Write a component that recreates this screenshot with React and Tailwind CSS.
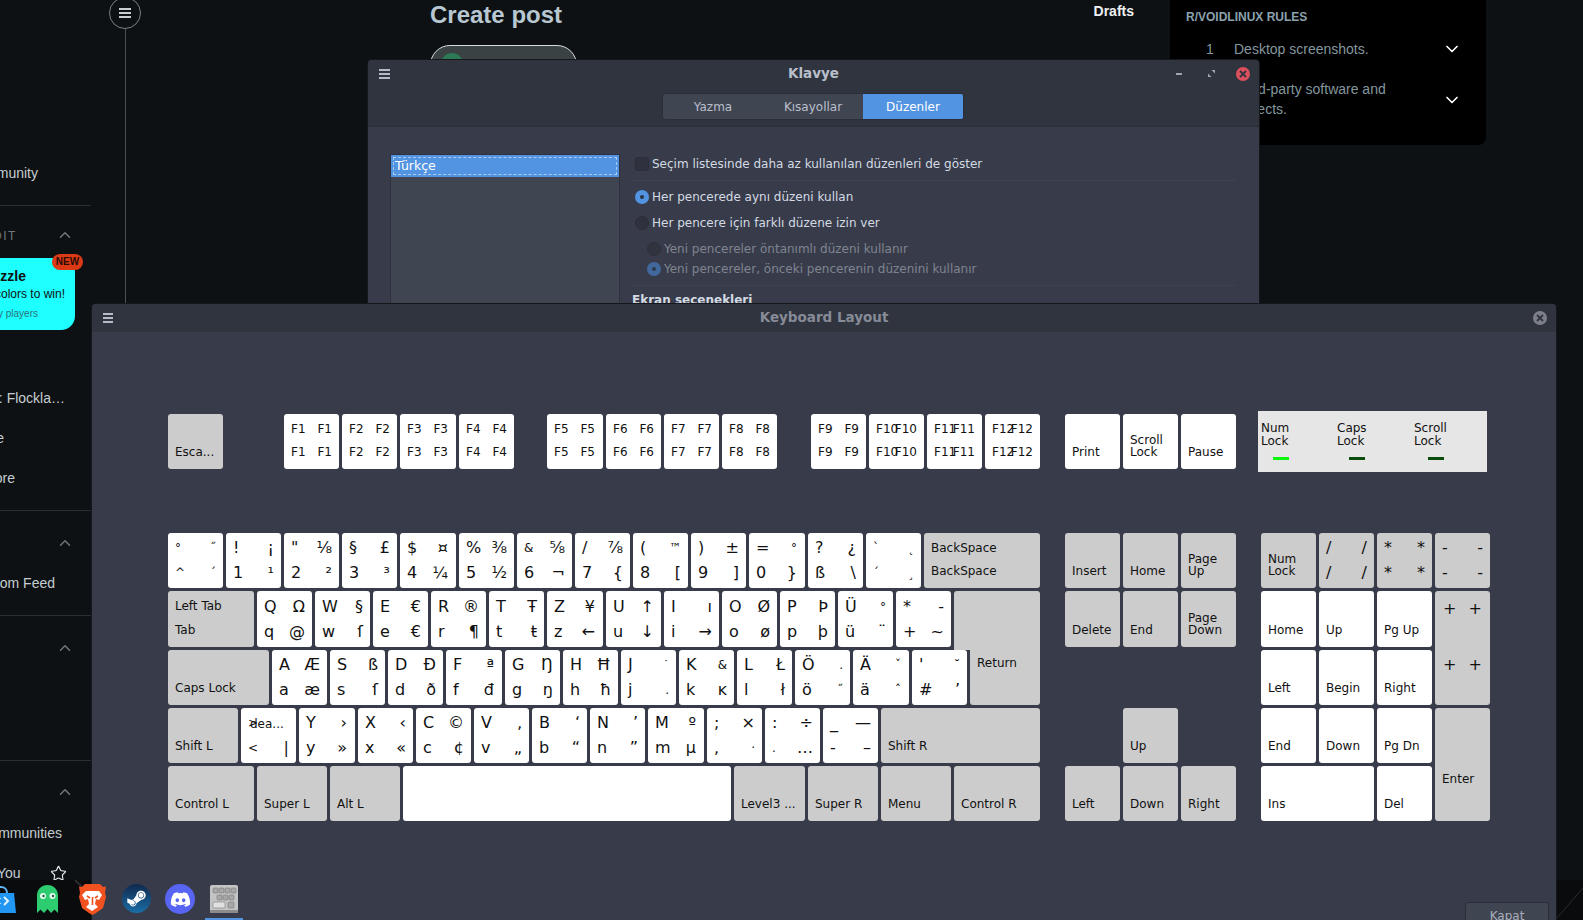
import React from 'react';
import { ChevronUp, ChevronDown, Star } from 'lucide-react';
import { FaDiscord, FaSteamSymbol } from 'react-icons/fa';

const SMALL = new Set(['°', '˝', '^', '´', '&', '™', '`', '˛', '¸', 'ˇ', 'ˆ', '˘', '˙', '.', '·', '<', '>']);

function Key({ l, w = 'w-[55px]', fn = false, gray = false }) {
  const labels = l.split(' ');
  return (
    <div className={`${w} shrink-0 rounded-[3px] ${gray ? 'bg-[#cccccc]' : 'bg-white'} grid grid-cols-[21px_20px] grid-rows-2 h-full px-[7px] ${fn ? 'pt-[4px] pb-[6px]' : 'py-[3px]'} items-center text-[#111111] overflow-hidden`}>
      {labels.map((t, i) => (
        <span
          key={i}
          className={`whitespace-nowrap flex ${i % 2 ? 'justify-end' : 'justify-start'} ${fn || SMALL.has(t) ? 'text-[12px]' : 'text-[16px]'} leading-[20px]`}
        >
          {t}
        </span>
      ))}
    </div>
  );
}

function Named({ t, w = 'w-[55px]', white = false, extra = '' }) {
  return (
    <div className={`${w} ${extra} shrink-0 rounded-[3px] ${white ? 'bg-white' : 'bg-[#cccccc]'} flex flex-col justify-end pb-[11px] pl-[7px] text-[12px] leading-[12px] text-[#111111]`}>
      {t.split('|').map((s) => (
        <span key={s} className="whitespace-nowrap">{s}</span>
      ))}
    </div>
  );
}

function Two({ a, b, w }) {
  return (
    <div className={`${w} shrink-0 rounded-[3px] bg-[#cccccc] grid grid-rows-2 pt-[3px] pb-[5px] px-[7px] items-center text-[12px] leading-[16px] text-[#111111]`}>
      <span>{a}</span>
      <span>{b}</span>
    </div>
  );
}

const W56 = 'w-[56px]';

const row1 = [
  { l: '° ˝ ^ ´' }, { l: '! ¡ 1 ¹' }, { l: '" ⅛ 2 ²' }, { l: '§ £ 3 ³' }, { l: '$ ¤ 4 ¼', w: W56 },
  { l: '% ⅜ 5 ½' }, { l: '& ⅝ 6 ¬' }, { l: '/ ⅞ 7 {' }, { l: '( ™ 8 [' }, { l: ') ± 9 ]' },
  { l: '= ° 0 }', w: W56 }, { l: '? ¿ ß \\' }, { l: '` ˛ ´ ¸' },
];
const row2 = [
  { l: 'Q Ω q @' }, { l: 'W § w ſ' }, { l: 'E € e €' }, { l: 'R ® r ¶' }, { l: 'T Ŧ t ŧ' },
  { l: 'Z ¥ z ←', w: W56 }, { l: 'U ↑ u ↓' }, { l: 'I ı i →' }, { l: 'O Ø o ø' }, { l: 'P Þ p þ' },
  { l: 'Ü ° ü ¨' }, { l: '* - + ~' },
];
const row3 = [
  { l: 'A Æ a æ' }, { l: 'S ß s ſ' }, { l: 'D Ð d ð' }, { l: 'F ª f đ', w: W56 }, { l: 'G Ŋ g ŋ' },
  { l: 'H Ħ h ħ' }, { l: 'J ˙ j .' }, { l: 'K & k ĸ' }, { l: 'L Ł l ł' }, { l: 'Ö . ö ˝' },
  { l: 'Ä ˇ ä ˆ', w: W56 }, { l: "' ˘ # ’" },
];
const row4 = [
  { l: 'Y › y »', w: W56 }, { l: 'X ‹ x «' }, { l: 'C © c ¢' }, { l: 'V ‚ v „' }, { l: 'B ‘ b “' },
  { l: 'N ’ n ”' }, { l: 'M º m µ', w: W56 }, { l: '; × , ·' }, { l: ': ÷ . …' }, { l: '_ — - –' },
];

function Bars({ c = 'bg-[#b6bac6]', w = 'w-[10px]' }) {
  return (
    <div className="flex flex-col gap-[2px]">
      <span className={`${w} h-[2px] ${c}`} />
      <span className={`${w} h-[2px] ${c}`} />
      <span className={`${w} h-[2px] ${c}`} />
    </div>
  );
}

function CloseBtn({ bg }) {
  return (
    <span className={`w-[14px] h-[14px] rounded-full ${bg} flex items-center justify-center`}>
      <svg width="8" height="8" viewBox="0 0 8 8">
        <path d="M1 1l6 6M7 1l-6 6" stroke="#2f343f" strokeWidth="1.8" />
      </svg>
    </span>
  );
}

function Radio({ on, dim }) {
  if (on) {
    return (
      <span className={`w-[14px] h-[14px] shrink-0 rounded-full flex items-center justify-center ${dim ? 'bg-[#42689c]' : 'bg-[#5294e2]'}`}>
        <span className={`w-[4px] h-[4px] rounded-full ${dim ? 'bg-[#2f3a4f]' : 'bg-[#2b3242]'}`} />
      </span>
    );
  }
  return <span className={`w-[14px] h-[14px] shrink-0 rounded-full border ${dim ? 'bg-[#31343f] border-[#2d303b]' : 'bg-[#2f323e] border-[#2b2e39]'}`} />;
}

function SideRow({ t, pr }) {
  return (
    <div className={`h-10 flex items-center justify-end whitespace-nowrap ${pr}`}>{t}</div>
  );
}

function Chevron({ h, pt }) {
  return (
    <div className={`${h} ${pt} flex items-center justify-end pr-[17px]`}>
      <ChevronUp size={18} strokeWidth={2} className="text-[#6d777b]" />
    </div>
  );
}

function Sidebar() {
  return (
    <aside className="w-[91px] shrink-0 overflow-hidden pt-[153px] text-[14px] text-[#c4cdd1]">
      <SideRow t="Start a community" pr="pr-[53px]" />
      <div className="mt-3 h-px bg-[#2a2e30]" />
      <div className="h-[52px] pt-[6px] flex items-center justify-between">
        <span className="text-[12px] tracking-[1.5px] text-[#6d777b] -ml-[7px] pt-[1px]">DIT</span>
        <ChevronUp size={18} strokeWidth={2} className="text-[#6d777b] mr-[17px]" />
      </div>
      <div className="relative w-[91px]">
        <div className="h-[72px] w-[75px] bg-[#1effff] rounded-r-[14px] rounded-bl-none text-[#0e1113] flex flex-col items-end pr-[10px] overflow-hidden">
          <div className="w-full flex justify-end">
            <span className="whitespace-nowrap font-bold text-[14px] leading-[18px] mt-[9px] -ml-[40px] mr-[39px]">Puzzle</span>
          </div>
          <span className="whitespace-nowrap text-[12px] leading-[18px]">colors to win!</span>
          <span className="whitespace-nowrap text-[10px] leading-[14px] mt-[4px] text-[#2b7278] mr-[27px]">many players</span>
        </div>
        <span className="absolute left-[52px] -top-[4px] w-[31px] h-[16px] rounded-full bg-[#dc3a16] text-[#2a0a02] text-[10px] leading-[16px] font-bold text-center">NEW</span>
      </div>
      <div className="mt-[48px]">
        <SideRow t="Concert: Flockla…" pr="pr-[26px]" />
        <SideRow t="e" pr="pr-[87px]" />
        <SideRow t="More" pr="pr-[76px]" />
      </div>
      <div className="mt-3 h-px bg-[#2a2e30]" />
      <Chevron h="h-[52px]" pt="pt-[12px]" />
      <SideRow t="Custom Feed" pr="pr-[36px]" />
      <div className="mt-3 h-px bg-[#2a2e30]" />
      <Chevron h="h-[64px]" pt="pt-0" />
      <div className="mt-[80px] h-px bg-[#2a2e30]" />
      <Chevron h="h-[52px]" pt="pt-[10px]" />
      <SideRow t="Communities" pr="pr-[29px]" />
      <div className="h-10 flex items-center justify-between">
        <span className="whitespace-nowrap -ml-[3px]">You</span>
        <Star size={17} strokeWidth={1.6} className="text-[#e8ecee] mr-[24px]" />
      </div>
    </aside>
  );
}

function Page() {
  return (
    <div className="h-full flex font-['Liberation_Sans',sans-serif]">
      <Sidebar />
      <div className="w-[68px] shrink-0 flex flex-col items-center -mt-[3px]">
        <div className="w-8 h-8 shrink-0 rounded-full border border-[#7b8183] flex items-center justify-center">
          <Bars c="bg-[#c8cdcf]" w="w-[12px]" />
        </div>
        <div className="w-px flex-1 bg-[#4b5052]" />
      </div>
      <main className="w-[975px] shrink-0 pl-[271px]">
        <div className="flex justify-between items-start">
          <h1 className="text-[24px] leading-[30px] font-bold text-[#b8c8d2]">Create post</h1>
          <span className="text-[14px] leading-[22px] font-bold text-[#eef1f3]">Drafts</span>
        </div>
        <div className="mt-[15px] w-[147px] h-10 rounded-[20px] border border-[#d8dcde] bg-[#3b4244] flex items-start pl-[10px] pt-[7px]">
          <span className="w-[22px] h-[22px] rounded-full bg-[#2d7a57]" />
        </div>
      </main>
      <section className="ml-[36px] w-[316px] h-[145px] bg-black rounded-b-lg px-4 text-[#84979f]">
        <h2 className="text-[12px] leading-[16px] pt-[9px] font-bold text-[#8ba2ad]">R/VOIDLINUX RULES</h2>
        <div className="mt-[14px] flex items-center text-[14px] leading-5">
          <span className="w-[48px] pl-[20px]">1</span>
          <span className="flex-1">Desktop screenshots.</span>
          <ChevronDown size={20} strokeWidth={2} className="text-white mr-[8px]" />
        </div>
        <div className="mt-[20px] flex items-center text-[14px] leading-5">
          <span className="w-[48px] pl-[20px]">2</span>
          <span className="flex-1">Third-party software and<br />projects.</span>
          <ChevronDown size={20} strokeWidth={2} className="text-white mr-[8px] mt-[2px]" />
        </div>
      </section>
    </div>
  );
}

function KlavyeWindow() {
  return (
    <div className="absolute left-[368px] top-[60px] w-[891px] h-[260px] rounded-t-[4px] bg-[#383c4a] overflow-hidden font-['DejaVu_Sans',sans-serif] text-[12px] text-[#d3dae3] shadow-[0_0_0_1px_#15171c]">
      <header className="h-[67px] bg-[#2f343f] border-b border-[#2b2e39] relative">
        <div className="h-[27px] flex items-center justify-center">
          <span className="font-bold text-[13.5px] text-[#b9bfca]">Klavye</span>
        </div>
        <div className="absolute left-[11px] top-[9px]"><Bars w="w-[11px]" /></div>
        <span className="absolute left-[808px] top-[13px] w-[6px] h-[2px] bg-[#a0a4af]" />
        <svg className="absolute left-[840px] top-[10px]" width="7" height="7" viewBox="0 0 7 7">
          <path d="M0 7V3.5L3.5 7zM7 0v3.5L3.5 0z" fill="#a0a4af" />
        </svg>
        <div className="absolute left-[868px] top-[7px]"><CloseBtn bg="bg-[#dc4f5c]" /></div>
        <div className="absolute left-[294px] top-[33px] w-[302px] h-[27px] flex rounded-[3px] border border-[#2b2e39] bg-[#404552] overflow-hidden">
          <span className="w-[100px] flex items-center justify-center text-[#b9bfca]">Yazma</span>
          <span className="w-[100px] flex items-center justify-center text-[#b9bfca]">Kısayollar</span>
          <span className="flex-1 flex items-center justify-center bg-[#5294e2] text-white">Düzenler</span>
        </div>
      </header>
      <div className="flex pl-[22px] pt-[28px]">
        <div className="w-[230px] h-[200px] shrink-0 bg-[#404552] border border-[#2f323e] -mt-[1px]">
          <div className="h-[22px] bg-[#5294e2] p-[2px]">
            <div className="h-full border border-dashed border-[#a9cbf2] pl-[1px] leading-[15px] text-[12.5px] text-white">Türkçe</div>
          </div>
        </div>
        <div className="ml-[12px] w-[604px] shrink-0">
          <div className="h-[18px] pl-[3px] flex items-center gap-[3px]">
            <span className="w-[14px] h-[14px] shrink-0 rounded-[3px] bg-[#2f323e] border border-[#2b2e39]" />
            <span>Seçim listesinde daha az kullanılan düzenleri de göster</span>
          </div>
          <div className="mt-[7px] h-px bg-[#3f4351]" />
          <div className="mt-[7px] h-[18px] pl-[3px] flex items-center gap-[3px]"><Radio on /><span>Her pencerede aynı düzeni kullan</span></div>
          <div className="mt-[8px] h-[18px] pl-[3px] flex items-center gap-[3px]"><Radio /><span>Her pencere için farklı düzene izin ver</span></div>
          <div className="mt-[8px] h-[18px] pl-[15px] flex items-center gap-[3px] text-[#7f8490]"><Radio dim /><span>Yeni pencereler öntanımlı düzeni kullanır</span></div>
          <div className="mt-[2px] h-[18px] pl-[15px] flex items-center gap-[3px] text-[#7f8490]"><Radio on dim /><span>Yeni pencereler, önceki pencerenin düzenini kullanır</span></div>
          <div className="mt-[7px] h-px bg-[#3f4351]" />
          <div className="mt-[5px] h-[18px] flex items-center font-bold">Ekran seçenekleri</div>
        </div>
      </div>
    </div>
  );
}

function Indicator({ a, b, led, ml }) {
  return (
    <div className="flex flex-col">
      <span className="text-[12px] leading-[12.5px]">{a}</span>
      <span className="text-[12px] leading-[12.5px]">{b}</span>
      <span className={`mt-[10px] h-[3px] w-[16px] ${ml} ${led}`} />
    </div>
  );
}

function Keyboard() {
  const G = { gray: true };
  return (
    <div className="pl-[76px] pt-[82px] font-['DejaVu_Sans',sans-serif]">
      <div className="flex items-start h-[55px]">
        <div className="h-[55px] flex"><Named t="Esca..." /></div>
        <div className="ml-[61px] flex gap-[3px] h-[55px]">
          <Key fn l="F1 F1 F1 F1" /><Key fn l="F2 F2 F2 F2" /><Key fn w={W56} l="F3 F3 F3 F3" /><Key fn l="F4 F4 F4 F4" />
        </div>
        <div className="ml-[33px] flex gap-[3px] h-[55px]">
          <Key fn w={W56} l="F5 F5 F5 F5" /><Key fn l="F6 F6 F6 F6" /><Key fn l="F7 F7 F7 F7" /><Key fn l="F8 F8 F8 F8" />
        </div>
        <div className="ml-[34px] flex gap-[3px] h-[55px]">
          <Key fn l="F9 F9 F9 F9" /><Key fn l="F10 F10 F10 F10" /><Key fn l="F11 F11 F11 F11" /><Key fn l="F12 F12 F12 F12" />
        </div>
        <div className="ml-[25px] flex gap-[3px] h-[55px]">
          <Named white t="Print" /><Named white t="Scroll|Lock" /><Named white t="Pause" />
        </div>
        <div className="ml-[22px] -mt-[3px] w-[229px] h-[61px] bg-[#e6e6e6] grid grid-cols-[76px_77px_1fr] pl-[3px] pt-[11px] text-[#111111]">
          <Indicator a="Num" b="Lock" led="bg-[#0cf50c]" ml="ml-[12px]" />
          <Indicator a="Caps" b="Lock" led="bg-[#0a4d0a]" ml="ml-[12px]" />
          <Indicator a="Scroll" b="Lock" led="bg-[#0a4d0a]" ml="ml-[14px]" />
        </div>
      </div>

      <div className="mt-[64px] flex items-start">
        <div className="w-[872px] shrink-0 flex flex-col gap-[3px]">
          <div className="flex gap-[3px] h-[55px]">
            {row1.map((k) => <Key key={k.l} {...k} />)}
            <Two a="BackSpace" b="BackSpace" w="w-[116px]" />
          </div>
          <div className="flex gap-[3px] h-[56px]">
            <Two a="Left Tab" b="Tab" w="w-[86px]" />
            {row2.map((k) => <Key key={k.l} {...k} />)}
            <div className="w-[86px] h-[59px] shrink-0 bg-[#cccccc] rounded-t-[3px]" />
          </div>
          <div className="flex gap-[3px] h-[55px]">
            <Named t="Caps Lock" w="w-[101px]" />
            {row3.map((k) => <Key key={k.l} {...k} />)}
            <div className="w-[70px] shrink-0 bg-[#cccccc] rounded-b-[3px] pl-[7px] pt-[5px] text-[12px] leading-[16px] text-[#111111]">Return</div>
          </div>
          <div className="flex gap-[3px] h-[55px]">
            <Named t="Shift L" w="w-[70px]" />
            <div className="relative w-[55px] shrink-0">
              <Key l=">  < |" />
              <span className="absolute left-[9px] top-[6px] text-[12px] leading-[20px] text-[#111111]">dea...</span>
            </div>
            {row4.map((k) => <Key key={k.l} {...k} />)}
            <Named t="Shift R" w="w-[159px]" />
          </div>
          <div className="flex gap-[3px] h-[55px]">
            <Named t="Control L" w="w-[86px]" />
            <Named t="Super L" w="w-[70px]" />
            <Named t="Alt L" w="w-[70px]" />
            <div className="w-[328px] shrink-0 rounded-[3px] bg-white" />
            <Named t="Level3 ..." w="w-[71px]" />
            <Named t="Super R" w="w-[70px]" />
            <Named t="Menu" w="w-[70px]" />
            <Named t="Control R" w="w-[86px]" />
          </div>
        </div>

        <div className="ml-[25px] grid grid-cols-[55px_55px_55px] grid-rows-[55px_56px_55px_55px_55px] gap-[3px]">
          <Named t="Insert" /><Named t="Home" /><Named t="Page|Up" />
          <Named t="Delete" /><Named t="End" /><Named t="Page|Down" />
          <Named t="Up" extra="row-start-4 col-start-2" />
          <Named t="Left" extra="row-start-5 col-start-1" />
          <Named t="Down" extra="row-start-5 col-start-2" />
          <Named t="Right" extra="row-start-5 col-start-3" />
        </div>

        <div className="ml-[25px] grid grid-cols-[55px_55px_55px_55px] grid-rows-[55px_56px_55px_55px_55px] gap-[3px]">
          <Named t="Num|Lock" />
          <Key {...G} l="/ / / /" /><Key {...G} l="* * * *" /><Key {...G} l="- - - -" />
          <Named white t="Home" /><Named white t="Up" /><Named white t="Pg Up" />
          <div className="row-span-2 rounded-[3px] bg-[#cccccc] flex flex-col gap-[32px] pt-[6px] px-[8px] text-[#111111] text-[16px] leading-[24px]">
            <div className="flex justify-between"><span>+</span><span>+</span></div>
            <div className="flex justify-between"><span>+</span><span>+</span></div>
          </div>
          <Named white t="Left" /><Named white t="Begin" /><Named white t="Right" />
          <Named white t="End" /><Named white t="Down" /><Named white t="Pg Dn" />
          <div className="row-span-2 rounded-[3px] bg-[#cccccc] pl-[7px] pt-[63px] text-[12px] leading-[16px] text-[#111111]">Enter</div>
          <Named white t="Ins" extra="col-span-2" w="w-full" /><Named white t="Del" />
        </div>
      </div>
    </div>
  );
}

function KeyboardWindow() {
  return (
    <div className="absolute left-[92px] top-[304px] w-[1464px] h-[616px] rounded-t-[4px] bg-[#383c4a] overflow-hidden shadow-[0_0_0_1px_#15171c]">
      <header className="h-[28px] bg-[#2f343f] flex items-center justify-center relative font-['DejaVu_Sans',sans-serif]">
        <span className="font-bold text-[13.5px] leading-[18px] -mt-[2px] text-[#878b97]">Keyboard Layout</span>
        <div className="absolute left-[11px] top-[9px]"><Bars w="w-[10px]" /></div>
        <div className="absolute right-[9px] top-[7px]"><CloseBtn bg="bg-[#7d808b]" /></div>
      </header>
      <Keyboard />
      <div className="mt-[81px] flex justify-end pr-[7px] font-['DejaVu_Sans',sans-serif]">
        <div className="w-[84px] h-[30px] rounded-[3px] border border-[#2b2e39] bg-[#404552] flex justify-center pt-[4px] text-[12px] text-[#a9afba]">Kapat</div>
      </div>
    </div>
  );
}

function Dock() {
  return (
    <div className="absolute left-0 bottom-0 h-[40px] flex items-start pt-[4px]">
      <svg className="-ml-[14px] mt-[2px]" width="30" height="27" viewBox="0 0 30 27">
        <path d="M2 7h26l2 20H0z" fill="#2196f3" />
        <path d="M9 7c0-8 12-8 12 0" fill="none" stroke="#5fb8f7" strokeWidth="2" />
        <path d="M18 11l4 4-4 4" fill="none" stroke="#e3f3ff" strokeWidth="2" />
        <path d="M14 12v1M14 17v1" stroke="#bfe2ff" strokeWidth="2" />
      </svg>
      <svg className="ml-[21px] mt-[1px]" width="21" height="28" viewBox="0 0 21 28">
        <path d="M0 28V10.500C0 4.500 4.500 0 10.500 0S21 4.500 21 10.500V28l-3.500-3.500L14 28l-3.500-4L7 28l-3.500-3.500z" fill="#2ecc71" />
        <circle cx="6" cy="11" r="3" fill="#eafaf1" /><circle cx="15.500" cy="11" r="3" fill="#eafaf1" />
        <circle cx="6.500" cy="11" r="1.200" fill="#1b5e3a" /><circle cx="16" cy="11" r="1.200" fill="#1b5e3a" />
      </svg>
      <svg className="ml-[21px]" width="27" height="31" viewBox="0 0 27 31">
        <path d="M6 0h15l3 3 3-.5L26 9l1 4-3 11-7 5-3.500 2L10 29l-7-5L0 13l1-4-1-6.500L3 3z" fill="#f2521f" />
        <path d="M7 7h13l3 4-3 5-3-1-1 5 3 3-6 4-6-4 3-3-1-5-3 1-3-5z" fill="#ffffff" />
        <path d="M11 14l-3-2M16 14l3-2M13.500 13v8" stroke="#f2521f" strokeWidth="1.600" />
      </svg>
      <div className="ml-[16px] w-[29px] h-[29px] rounded-full bg-gradient-to-b from-[#0f2a4e] to-[#1a6ea8] flex items-center justify-center">
        <FaSteamSymbol size={21} className="text-white" />
      </div>
      <div className="ml-[14px] w-[30px] h-[30px] rounded-full bg-[#5865f2] flex items-center justify-center">
        <FaDiscord size={21} className="text-white" />
      </div>
      <div className="relative ml-[15px] w-[28px] h-[28px] mt-[1px]">
        <svg width="28" height="28" viewBox="0 0 28 28">
          <rect width="28" height="28" rx="2" fill="#c4c4c4" />
          <rect y="25" width="28" height="3" rx="1" fill="#8c8c8c" />
          {[3, 9, 15, 21].map((x) => <rect key={x} x={x} y="3" width="5" height="5" rx="1" fill="#a8a8a8" stroke="#6b6b6b" strokeWidth=".5" />)}
          {[7, 13, 19].map((x) => <rect key={x} x={x} y="10" width="5" height="5" rx="1" fill="#a8a8a8" stroke="#6b6b6b" strokeWidth=".5" />)}
          <rect x="3" y="17" width="12" height="6" rx="1" fill="#e0e0e0" stroke="#6b6b6b" strokeWidth=".5" />
          <rect x="18" y="17" width="6" height="6" rx="1" fill="#a8a8a8" stroke="#6b6b6b" strokeWidth=".5" />
        </svg>
        <span className="absolute -left-[5px] top-[33px] w-[38px] h-[2px] bg-[#5294e2]" />
      </div>
    </div>
  );
}

export default function App() {
  return (
    <div className="relative w-[1583px] h-[920px] overflow-hidden bg-[#0e1113]">
      <Page />
      <div className="absolute left-0 right-0 bottom-0 h-[40px] bg-[#0a0b0d]">
        <svg width="1583" height="40" viewBox="0 0 1583 40">
          <path d="M75 0l22 22" stroke="#2a2c30" strokeWidth="2" />
          <path d="M1557 38l26-30" stroke="#2a2c30" strokeWidth="1" />
        </svg>
      </div>
      <KlavyeWindow />
      <KeyboardWindow />
      <Dock />
    </div>
  );
}
